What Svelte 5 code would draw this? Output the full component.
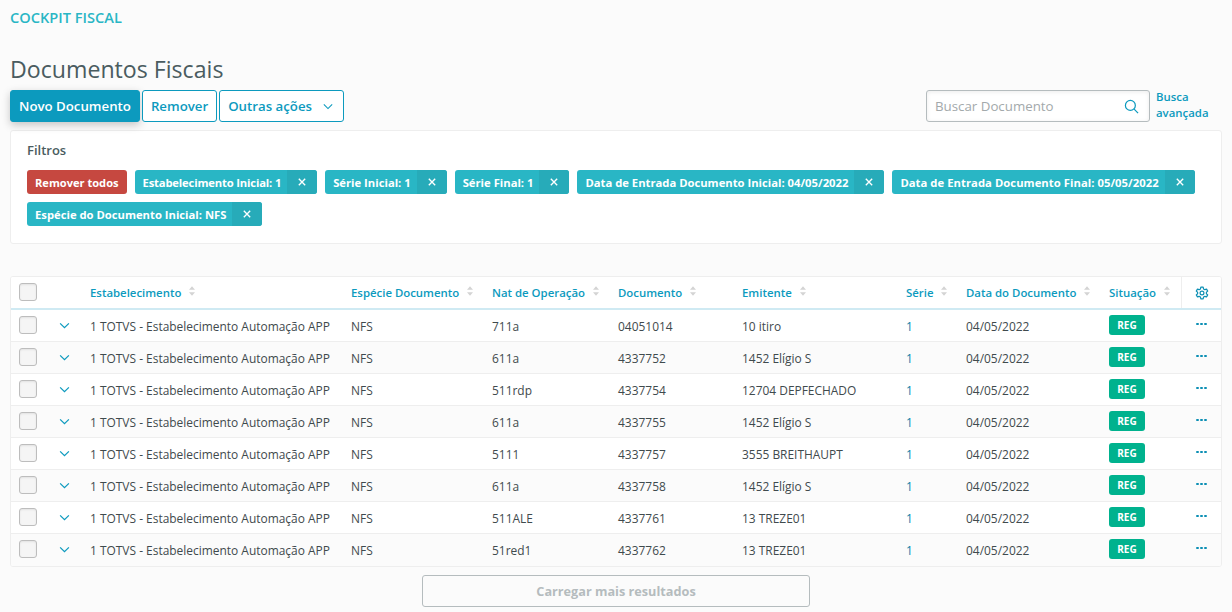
<script>
  const filters = [
    'Estabelecimento Inicial: 1',
    'Série Inicial: 1',
    'Série Final: 1',
    'Data de Entrada Documento Inicial: 04/05/2022',
    'Data de Entrada Documento Final: 05/05/2022',
    'Espécie do Documento Inicial: NFS'
  ];
  const columns = ['Estabelecimento', 'Espécie Documento', 'Nat de Operação', 'Documento', 'Emitente', 'Série', 'Data do Documento', 'Situação'];
  const rows = [
    ['711a', '04051014', '10 itiro'],
    ['611a', '4337752', '1452 Elígio S'],
    ['511rdp', '4337754', '12704 DEPFECHADO'],
    ['611a', '4337755', '1452 Elígio S'],
    ['5111', '4337757', '3555 BREITHAUPT'],
    ['611a', '4337758', '1452 Elígio S'],
    ['511ALE', '4337761', '13 TREZE01'],
    ['51red1', '4337762', '13 TREZE01']
  ];
</script>

<main class="page">
  <div class="crumb">COCKPIT FISCAL</div>
  <h1>Documentos Fiscais</h1>

  <div class="actions">
    <button class="btn primary">Novo Documento</button>
    <button class="btn">Remover</button>
    <button class="btn">Outras ações
      <svg class="caret" viewBox="0 0 12 8" width="10" height="7"><path d="M1 1.500 6 6.500 11 1.500" fill="none" stroke="currentColor" stroke-width="1.300"/></svg>
    </button>
    <div class="search">
      <span class="placeholder">Buscar Documento</span>
      <svg viewBox="0 0 16 16" width="15" height="15"><circle cx="6.800" cy="6.800" r="5.300" fill="none" stroke="#0c9abe" stroke-width="1.300"/><path d="M10.800 10.800 15 15" stroke="#0c9abe" stroke-width="1.300"/></svg>
    </div>
    <a class="advanced" href="#top">Busca<br />avançada</a>
  </div>

  <section class="filters">
    <div class="filters-title">Filtros</div>
    <div class="tags">
      <span class="tag danger">Remover todos</span>
      {#each filters as f, i}
        <span class="tag">
          <span class="tag-text" class:tight={i === 0} class:wide={i === 4}>{f}</span>
          <span class="tag-x"><svg viewBox="0 0 10 10" width="8" height="8"><path d="M1 1 9 9M9 1 1 9" stroke="#fff" stroke-width="1.700"/></svg></span>
        </span>
      {/each}
    </div>
  </section>

  <section class="table">
    <div class="row head">
      <div class="cell check"><span class="box"></span></div>
      <div class="cell"></div>
      {#each columns as c}
        <div class="cell th">{c}
          <svg class="sort" viewBox="0 0 7 11" width="6" height="10"><path d="M3.500 0 7 4H0Z M3.500 11 7 7H0Z" fill="#d4d4d4"/></svg>
        </div>
      {/each}
      <div class="cell gear">
        <svg viewBox="0 0 24 24" width="14" height="14" fill="none" stroke="#0c8fb4" stroke-width="2" stroke-linejoin="round"><path d="M10 2h4l.6 3 2.300 1.300 2.900-1 2 3.500-2.300 2v2.400l2.300 2-2 3.500-2.900-1-2.300 1.300-.6 3h-4l-.6-3-2.300-1.300-2.900 1-2-3.500 2.300-2v-2.400l-2.300-2 2-3.500 2.900 1L9.400 5z"/><circle cx="12" cy="12" r="3.300"/></svg>
      </div>
    </div>
    {#each rows as r, i}
      <div class="row" class:odd={i % 2 === 1}>
        <div class="cell check"><span class="box"></span></div>
        <div class="cell chev"><svg viewBox="0 0 12 8" width="11" height="7"><path d="M1 1.500 6 6.500 11 1.500" fill="none" stroke="#0c9abe" stroke-width="1.400"/></svg></div>
        <div class="cell txt">1 TOTVS - Estabelecimento Automação APP</div>
        <div class="cell txt">NFS</div>
        <div class="cell txt">{r[0]}</div>
        <div class="cell txt">{r[1]}</div>
        <div class="cell txt">{r[2]}</div>
        <div class="cell txt serie">1</div>
        <div class="cell txt">04/05/2022</div>
        <div class="cell"><span class="badge">REG</span></div>
        <div class="cell dots"><i></i><i></i><i></i></div>
      </div>
    {/each}
  </section>

  <div class="more"><button class="load">Carregar mais resultados</button></div>
</main>

<style>
  :global(body) {
    margin: 0;
    background: #fbfbfb;
    font-family: "Open Sans", "Noto Sans", sans-serif;
    color: #4a5c60;
  }
  .page {
    height: 612px;
    padding: 0 10px;
    box-sizing: border-box;
    overflow: hidden;
  }
  .crumb {
    padding-top: 10px;
    height: 17px;
    font-size: 14.600px;
    line-height: 15px;
    font-weight: 600;
    color: #29b6c5;
    white-space: nowrap;
  }
  h1 {
    margin: 29px 0 0;
    height: 34px;
    font-size: 23.150px;
    line-height: 27px;
    font-weight: 400;
    color: #4a5c60;
  }
  .actions {
    display: flex;
    align-items: flex-start;
    gap: 2px;
    height: 40px;
  }
  .btn {
    height: 32px;
    box-sizing: border-box;
    padding: 0 8px;
    border: 1px solid #0c9abe;
    border-radius: 3px;
    background: #fff;
    color: #0c9abe;
    font: 600 13.250px "Open Sans", sans-serif;
    display: flex;
    align-items: center;
  }
  .primary {
    background: #0c9abe;
    color: #fff;
    box-shadow: 0 3px 8px rgba(0, 0, 0, 0.22);
  }
  .caret { margin-left: 11px; margin-right: 2px; }
  .search {
    margin-left: auto;
    width: 224px;
    height: 32px;
    box-sizing: border-box;
    border: 1px solid #b5bcbe;
    border-radius: 3px;
    background: #fff;
    display: flex;
    align-items: center;
    justify-content: space-between;
    padding: 0 10px 0 8px;
    box-shadow: inset 0 1px 4px rgba(0, 0, 0, 0.08);
  }
  .placeholder { font-size: 13.300px; color: #a3a9ab; }
  .advanced {
    width: 66px;
    margin-left: 4px;
    font-size: 11.400px;
    line-height: 16px;
    font-weight: 600;
    color: #0c9abe;
    text-decoration: none;
    margin-top: -1px;
    box-sizing: border-box;
  }
  .filters {
    height: 114px;
    box-sizing: border-box;
    background: #fff;
    border: 1px solid #eeeeee;
    border-radius: 3px;
    padding: 11px 16px 0;
    margin-bottom: 32px;
  }
  .filters-title {
    font-size: 13px;
    line-height: 17px;
    font-weight: 600;
    margin-bottom: 11px;
  }
  .tags {
    display: flex;
    flex-wrap: wrap;
    gap: 8px;
  }
  .tag {
    height: 24px;
    display: flex;
    align-items: center;
    background: #29b6c5;
    border-radius: 3px;
    color: #fff;
    font-size: 11.250px;
    font-weight: 700;
    overflow: hidden;
    white-space: nowrap;
  }
  .danger {
    background: #c64840;
    padding: 0 8px;
    font-size: 11.100px;
  }
  .tag-text { padding: 0 6px 0 8px; }
  .tight { letter-spacing: -0.17px; }
  .wide { letter-spacing: 0.05px; }
  .tag-x {
    width: 30px;
    height: 24px;
    background: #27abb9;
    display: flex;
    align-items: center;
    justify-content: center;
  }
  .table {
    background: #fff;
    border: 1px solid #eeeeee;
    border-radius: 3px;
    height: 291px;
    box-sizing: border-box;
    overflow: hidden;
  }
  .row {
    display: grid;
    grid-template-columns: 40px 39px 261px 141px 126px 124px 164px 60px 143px 72px 41px;
    height: 32px;
    box-sizing: border-box;
    border-bottom: 1px solid #eeeeee;
    font-size: 11.950px;
    color: #3f4a4d;
  }
  .row:last-child { border-bottom-color: transparent; }
  .row.odd { background: #fbfbfb; }
  .row.head {
    height: 33px;
    border-bottom: 2px solid #cfeaf3;
    background: #fff;
    font-size: 11.400px;
  }
  .cell {
    display: flex;
    align-items: center;
    white-space: nowrap;
  }
  .txt { padding-top: 1px; }
  .th {
    color: #0c9abe;
    font-weight: 600;
  }
  .sort { margin-left: 8px; margin-top: -3px; }
  .check { padding-left: 8px; }
  .box {
    width: 16px;
    height: 16px;
    border: 1px solid #bdbdbd;
    border-radius: 3px;
    background: #f5f5f5;
    box-shadow: inset 0 1px 2px rgba(0, 0, 0, 0.08);
    margin-top: -1px;
  }
  .chev { padding-left: 8px; }
  .serie { color: #0c7fa8; }
  .badge {
    width: 36px;
    height: 20px;
    border-radius: 3px;
    background: #00b28e;
    color: #fff;
    font-size: 10px;
    font-weight: 700;
    display: flex;
    align-items: center;
    justify-content: center;
    margin-top: -1px;
  }
  .gear {
    justify-content: center;
    border-left: 1px solid #eeeeee;
  }
  .dots {
    gap: 1.500px;
    justify-content: center;
    margin-top: -3px;
  }
  .dots i {
    width: 2.500px;
    height: 2.500px;
    border-radius: 50%;
    background: #0c8fb4;
  }
  .more {
    display: flex;
    justify-content: center;
    margin-top: 8px;
  }
  .load {
    width: 388px;
    height: 32px;
    border: 1px solid #b5bcbe;
    border-radius: 3px;
    background: #fbfbfb;
    color: #b5bcbe;
    font: 700 12.700px "Open Sans", sans-serif;
  }
</style>
